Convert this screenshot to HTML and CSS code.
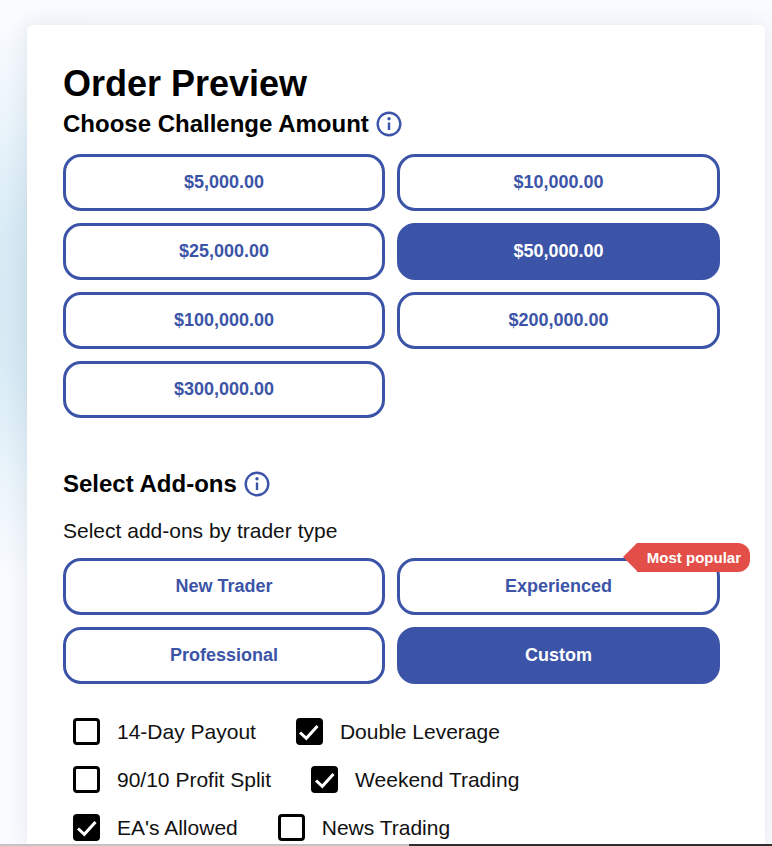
FILE: index.html
```html
<!DOCTYPE html>
<html lang="en">
<head>
<meta charset="utf-8">
<title>Order Preview</title>
<link rel="stylesheet" href="styles.css">
</head>
<body>
<main class="page">
  <section class="card">
    <h1 class="title">Order Preview</h1>
    <h2 class="heading first">Choose Challenge Amount
      <svg class="info" viewBox="0 0 26 26" aria-hidden="true"><circle cx="13" cy="13" r="11.3"/><path d="M13 11.5v7.5"/><circle class="dot" cx="13" cy="7.8" r="1.7"/></svg>
    </h2>
    <div class="options amounts">
      <button class="option">$5,000.00</button>
      <button class="option">$10,000.00</button>
      <button class="option">$25,000.00</button>
      <button class="option active">$50,000.00</button>
      <button class="option">$100,000.00</button>
      <button class="option">$200,000.00</button>
      <button class="option">$300,000.00</button>
    </div>
    <h2 class="heading addons">Select Add-ons
      <svg class="info" viewBox="0 0 26 26" aria-hidden="true"><circle cx="13" cy="13" r="11.3"/><path d="M13 11.5v7.5"/><circle class="dot" cx="13" cy="7.8" r="1.7"/></svg>
    </h2>
    <p class="sub">Select add-ons by trader type</p>
    <div class="options">
      <button class="option">New Trader</button>
      <div class="popular-wrap">
        <button class="option">Experienced</button>
        <span class="badge">Most popular</span>
      </div>
      <button class="option">Professional</button>
      <button class="option active">Custom</button>
    </div>
    <div class="checks">
      <div class="check-row">
        <label class="check"><span class="box"></span>14-Day Payout</label>
        <label class="check"><span class="box on"><svg viewBox="0 0 27 27" aria-hidden="true"><path d="M5 14.5l6.3 5.8L22.5 8"/></svg></span>Double Leverage</label>
      </div>
      <div class="check-row">
        <label class="check"><span class="box"></span>90/10 Profit Split</label>
        <label class="check"><span class="box on"><svg viewBox="0 0 27 27" aria-hidden="true"><path d="M5 14.5l6.3 5.8L22.5 8"/></svg></span>Weekend Trading</label>
      </div>
      <div class="check-row">
        <label class="check"><span class="box on"><svg viewBox="0 0 27 27" aria-hidden="true"><path d="M5 14.5l6.3 5.8L22.5 8"/></svg></span>EA's Allowed</label>
        <label class="check"><span class="box"></span>News Trading</label>
      </div>
    </div>
  </section>
</main>
<div class="edge"><span class="edge-light"></span><span class="edge-dark"></span></div>
</body>
</html>
```
FILE: styles.css
```css
* { box-sizing: border-box; }
html, body { margin: 0; height: 100%; overflow: hidden; }
body {
  font-family: "Liberation Sans", Arial, sans-serif;
  color: #000;
  background:
    radial-gradient(ellipse 170px 290px at 50px 300px, #cfe6f1 0%, #d8ebf5 35%, #ecf5fb 70%, rgba(249,251,255,0) 100%),
    #f9fbff;
}
.page { height: 846px; overflow: hidden; padding: 25px 7px 0 27px; }
.card {
  background: #fff;
  border-radius: 6px 6px 0 0;
  padding: 37px 45px 0 36px;
  box-shadow: 0 0 22px rgba(60,60,80,.1);
  height: 821px;
  overflow: hidden;
  clip-path: inset(-30px -30px 0 -30px);
}
.title { margin: 0; font-size: 36px; line-height: 44px; font-weight: 700; }
.heading {
  margin: 0;
  display: flex;
  align-items: center;
  gap: 7px;
  font-size: 24px;
  line-height: 28px;
  font-weight: 700;
}
.heading.first { margin-top: 4px; }
.info { width: 26px; height: 26px; fill: none; stroke: #3c54a7; stroke-width: 2.4; }
.info .dot { fill: #3c54a7; stroke: none; }
.options {
  display: grid;
  grid-template-columns: 322px 323px;
  gap: 12px;
}
.amounts { margin-top: 16px; }
.option {
  display: block;
  width: 100%;
  height: 57px;
  padding: 0;
  border: 3px solid #3c54a7;
  border-radius: 18px;
  background: #fff;
  color: #3c54a7;
  font: 700 18px "Liberation Sans", Arial, sans-serif;
}
.option.active { background: #3c54a7; color: #fff; }
.addons { margin-top: 52px; }
.sub { margin: 21px 0 15px; font-size: 21px; line-height: 24px; color: #111; }
.popular-wrap { position: relative; }
.badge {
  position: absolute;
  top: -15px;
  right: -30px;
  height: 29px;
  padding: 0 9px 0 10px;
  display: flex;
  align-items: center;
  background: #e34f48;
  color: #fff;
  font-size: 15px;
  font-weight: 700;
  border-radius: 0 12px 12px 0;
}
.badge::before {
  content: "";
  position: absolute;
  left: -14px;
  top: 0;
  border-style: solid;
  border-width: 14.5px 14px 14.5px 0;
  border-color: transparent #e34f48 transparent transparent;
}
.checks { margin-top: 34px; padding-left: 10px; display: flex; flex-direction: column; gap: 21px; }
.check-row { display: flex; gap: 40px; }
.check { display: flex; align-items: center; gap: 17px; font-size: 21px; line-height: 27px; color: #111; }
.box {
  width: 27px;
  height: 27px;
  flex: none;
  border: 3.5px solid #000;
  border-radius: 4px;
  display: block;
  position: relative;
}
.box.on { background: #000; }
.box svg { position: absolute; inset: -3.5px; width: 27px; height: 27px; fill: none; stroke: #fff; stroke-width: 3; }
.edge { position: fixed; left: 0; right: 0; bottom: 0; height: 2px; display: flex; }
.edge-light { width: 409px; background: #c4c4c4; }
.edge-dark { flex: 1; background: #2e2e2e; }
```
